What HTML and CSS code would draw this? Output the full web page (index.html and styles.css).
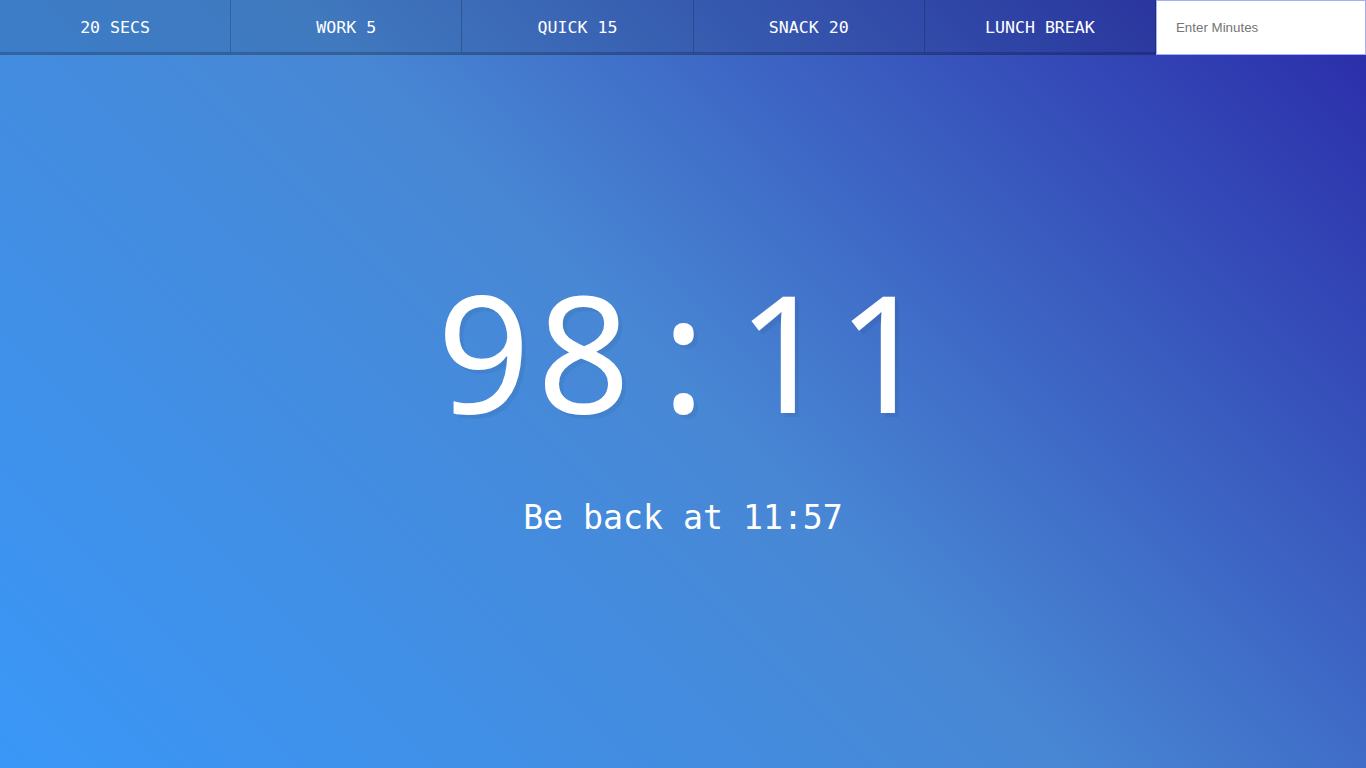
FILE: index.html
```html
<!DOCTYPE html>
<html lang="en">
<head>
<meta charset="utf-8">
<title>Countdown Timer</title>
<link rel="stylesheet" href="styles.css">
</head>
<body>
<div class="timer">
  <div class="timer__controls">
    <button class="timer__button">20 Secs</button>
    <button class="timer__button">Work 5</button>
    <button class="timer__button">Quick 15</button>
    <button class="timer__button">Snack 20</button>
    <button class="timer__button">Lunch Break</button>
    <form class="timer__form">
      <input type="text" name="minutes" placeholder="Enter Minutes">
    </form>
  </div>
  <div class="display">
    <h1 class="display__time-left">98<span class="display__colon">:</span>11</h1>
    <p class="display__end-time">Be back at 11:57</p>
  </div>
</div>
</body>
</html>
```
FILE: styles.css
```css
html {
  box-sizing: border-box;
  background: #3a96f5;
  background: linear-gradient(45deg, #3a97f7 0%, #4887d4 50%, #2a2aa8 100%);
  min-height: 100%;
}
*, *::before, *::after { box-sizing: inherit; }

body {
  margin: 0;
  text-align: center;
  font-family: "DejaVu Sans Mono", monospace;
}

.timer {
  display: flex;
  flex-direction: column;
  min-height: 100vh;
}

.timer__controls {
  display: grid;
  grid-template-columns: repeat(5, 1fr) 210px;
}

.timer__button {
  background: rgba(0, 0, 0, 0.1);
  border: 0;
  border-bottom: 3px solid rgba(0, 0, 0, 0.2);
  border-right: 1px solid rgba(0, 0, 0, 0.2);
  color: #fff;
  font-family: "DejaVu Sans Mono", monospace;
  font-size: 16.6px;
  line-height: 31px;
  padding: 12px 10px 9px;
  text-transform: uppercase;
  cursor: pointer;
}

.timer__form {
  display: flex;
  margin: 0;
}

.timer__form input {
  flex: 1;
  min-width: 0;
  border: 1px solid #a3aef8;
  background: #fff;
  padding: 0 19px;
  font-family: "Liberation Sans", Arial, sans-serif;
  font-size: 13.33px;
  color: #333;
}

.timer__form input::placeholder { color: #757575; }

.display {
  flex: 1;
  display: flex;
  flex-direction: column;
  align-items: center;
  justify-content: center;
  padding-bottom: 24px;
}

.display__time-left {
  margin: 0;
  padding-left: 8px;
  color: #fff;
  font-family: "Noto Sans", "Open Sans", sans-serif;
  font-weight: 400;
  font-size: 163px;
  line-height: 176px;
  letter-spacing: 6.8px;
  text-shadow: 4px 4px 0 rgba(0, 0, 0, 0.05);
}

.display__colon {
  display: inline-block;
  width: 100px;
  text-align: center;
}

.display__end-time {
  margin: 60px 0 0;
  color: #fff;
  font-family: "DejaVu Sans Mono", monospace;
  font-size: 33.2px;
  line-height: 40px;
}
```
